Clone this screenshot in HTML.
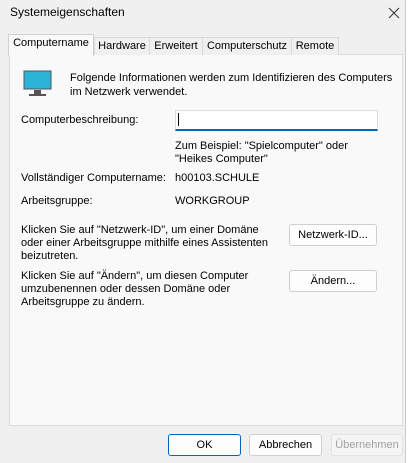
<!DOCTYPE html>
<html><head><style>
body{margin:0;width:412px;height:463px;background:#f0f0f0;font-family:"Liberation Sans",sans-serif;font-size:11px;color:#000;position:relative;overflow:hidden}
.a{position:absolute;white-space:nowrap}
.panel{position:absolute;left:9px;top:54px;width:392px;height:370px;background:#f9f9f9;border:1px solid #dcdcdc}
.tab{position:absolute;top:37px;height:17px;border:1px solid #d9d9d9;border-bottom:none;background:#f0f0f0;text-align:center;line-height:17px}
.btn{position:absolute;height:20px;border:1px solid #cfcfcf;border-radius:3px;background:#fdfdfd;text-align:center;line-height:20px}
</style></head><body>
<div class="a" style="left:10px;top:5px;font-size:12px">Systemeigenschaften</div>
<svg class="a" style="left:388px;top:7px" width="12" height="12"><path d="M1 1L11 11M11 1L1 11" stroke="#333" stroke-width="1"/></svg>
<div style="position:absolute;left:405px;top:0;width:7px;height:463px;background:#fff;border-left:1px solid #ccc"></div>
<div class="panel"></div>
<div class="tab" style="left:94px;width:54px">Hardware</div>
<div class="tab" style="left:149px;width:52px">Erweitert</div>
<div class="tab" style="left:202px;width:88px">Computerschutz</div>
<div class="tab" style="left:291px;width:46px">Remote</div>
<div class="tab" style="left:8px;top:34px;width:84px;height:21px;background:#f9f9f9;border-color:#d0d0d0">Computername</div>
<svg class="a" style="left:23px;top:70px" width="30" height="27"><rect x="1" y="1" width="27" height="18" fill="#2bb4d6" stroke="#555"/><rect x="11" y="20" width="7" height="4" fill="#555"/><rect x="6" y="24" width="17" height="2" fill="#555"/></svg>
<div class="a" style="left:70px;top:71px;line-height:14px">Folgende Informationen werden zum Identifizieren des Computers<br>im Netzwerk verwendet.</div>
<div class="a" style="left:21px;top:114px">Computerbeschreibung:</div>
<div class="a" style="left:175px;top:110px;width:201px;height:18px;background:#fff;border:1px solid #ddd;border-bottom:2px solid #0067c0"></div>
<div class="a" style="left:178px;top:113px;width:1px;height:13px;background:#000"></div>
<div class="a" style="left:175px;top:140px;line-height:13px">Zum Beispiel: "Spielcomputer" oder<br>"Heikes Computer"</div>
<div class="a" style="left:21px;top:172px">Vollständiger Computername:</div>
<div class="a" style="left:175px;top:172px">h00103.SCHULE</div>
<div class="a" style="left:21px;top:195px">Arbeitsgruppe:</div>
<div class="a" style="left:175px;top:195px">WORKGROUP</div>
<div class="a" style="left:21px;top:224px;line-height:13px">Klicken Sie auf "Netzwerk-ID", um einer Domäne<br>oder einer Arbeitsgruppe mithilfe eines Assistenten<br>beizutreten.</div>
<div class="btn" style="left:289px;top:224px;width:86px">Netzwerk-ID...</div>
<div class="a" style="left:21px;top:270px;line-height:13px">Klicken Sie auf "Ändern", um diesen Computer<br>umzubenennen oder dessen Domäne oder<br>Arbeitsgruppe zu ändern.</div>
<div class="btn" style="left:289px;top:270px;width:86px">Ändern...</div>
<div class="btn" style="left:168px;top:434px;width:71px;border-color:#0067c0">OK</div>
<div class="btn" style="left:249px;top:434px;width:71px">Abbrechen</div>
<div class="btn" style="left:331px;top:434px;width:70px;color:#a0a0a0;border-color:#e3e3e3;background:#f5f5f5">Übernehmen</div>
</body></html>
